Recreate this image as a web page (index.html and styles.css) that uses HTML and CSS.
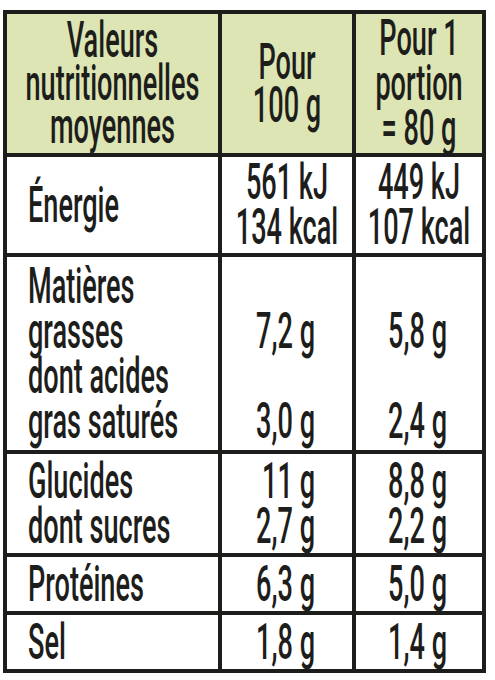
FILE: index.html
```html
<!DOCTYPE html>
<html lang="fr">
<head>
<meta charset="utf-8">
<title>Valeurs nutritionnelles</title>
<link rel="stylesheet" href="styles.css">
</head>
<body>
<div class="table">
  <div class="cell head center"><div class="t hl">Valeurs<br>nutritionnelles<br>moyennes</div></div>
  <div class="cell head center"><div class="t hl">Pour<br>100 g</div></div>
  <div class="cell head center"><div class="t">Pour 1<br>portion<br>= 80 g</div></div>

  <div class="cell label"><div class="t">Énergie</div></div>
  <div class="cell center"><div class="t">561 kJ<br>134 kcal</div></div>
  <div class="cell center"><div class="t">449 kJ<br>107 kcal</div></div>

  <div class="cell label"><div class="t">Matières<br>grasses<br>dont acides<br>gras saturés</div></div>
  <div class="cell v2"><div class="t">&nbsp;<br>7,2 g<br>&nbsp;<br>3,0 g</div></div>
  <div class="cell v3"><div class="t">&nbsp;<br>5,8 g<br>&nbsp;<br>2,4 g</div></div>

  <div class="cell label"><div class="t">Glucides<br>dont sucres</div></div>
  <div class="cell v2"><div class="t">11 g<br>2,7 g</div></div>
  <div class="cell v3"><div class="t">8,8 g<br>2,2 g</div></div>

  <div class="cell label"><div class="t">Protéines</div></div>
  <div class="cell v2"><div class="t">6,3 g</div></div>
  <div class="cell v3"><div class="t">5,0 g</div></div>

  <div class="cell label"><div class="t">Sel</div></div>
  <div class="cell v2"><div class="t">1,8 g</div></div>
  <div class="cell v3"><div class="t">1,4 g</div></div>
</div>
</body>
</html>
```
FILE: styles.css
```css
html, body {
  margin: 0;
  padding: 0;
  background: #ffffff;
  overflow: hidden;
}

.table {
  margin: 10px 0 0 3px;
  width: 483px;
  box-sizing: border-box;
  padding: 4px;
  gap: 4px;
  background: #1d1d1b;
  display: grid;
  grid-template-columns: 211px 130px 126px;
  grid-template-rows: 139px 96px 193px 99px 54px 54px;
  font-family: "Roboto", "Liberation Sans", sans-serif;
  font-weight: 500;
  font-size: 50px;
  color: #1d1d1b;
}

.cell {
  background: #ffffff;
  display: flex;
  flex-direction: column;
  justify-content: center;
  box-sizing: border-box;
  min-width: 0;
}

.head {
  background: #dce5b3;
}

.t {
  flex: none;
  width: 184.5%;
  transform: scaleX(0.542);
  transform-origin: left center;
  line-height: 45px;
  white-space: nowrap;
}

.t.hl {
  line-height: 43px;
}

.center .t {
  text-align: center;
}

.label {
  padding-left: 21px;
}

.label .t {
  text-align: left;
}

.v2 {
  padding-right: 37px;
}

.v3 {
  padding-right: 35px;
}

.v2 .t, .v3 .t {
  text-align: right;
}
```
